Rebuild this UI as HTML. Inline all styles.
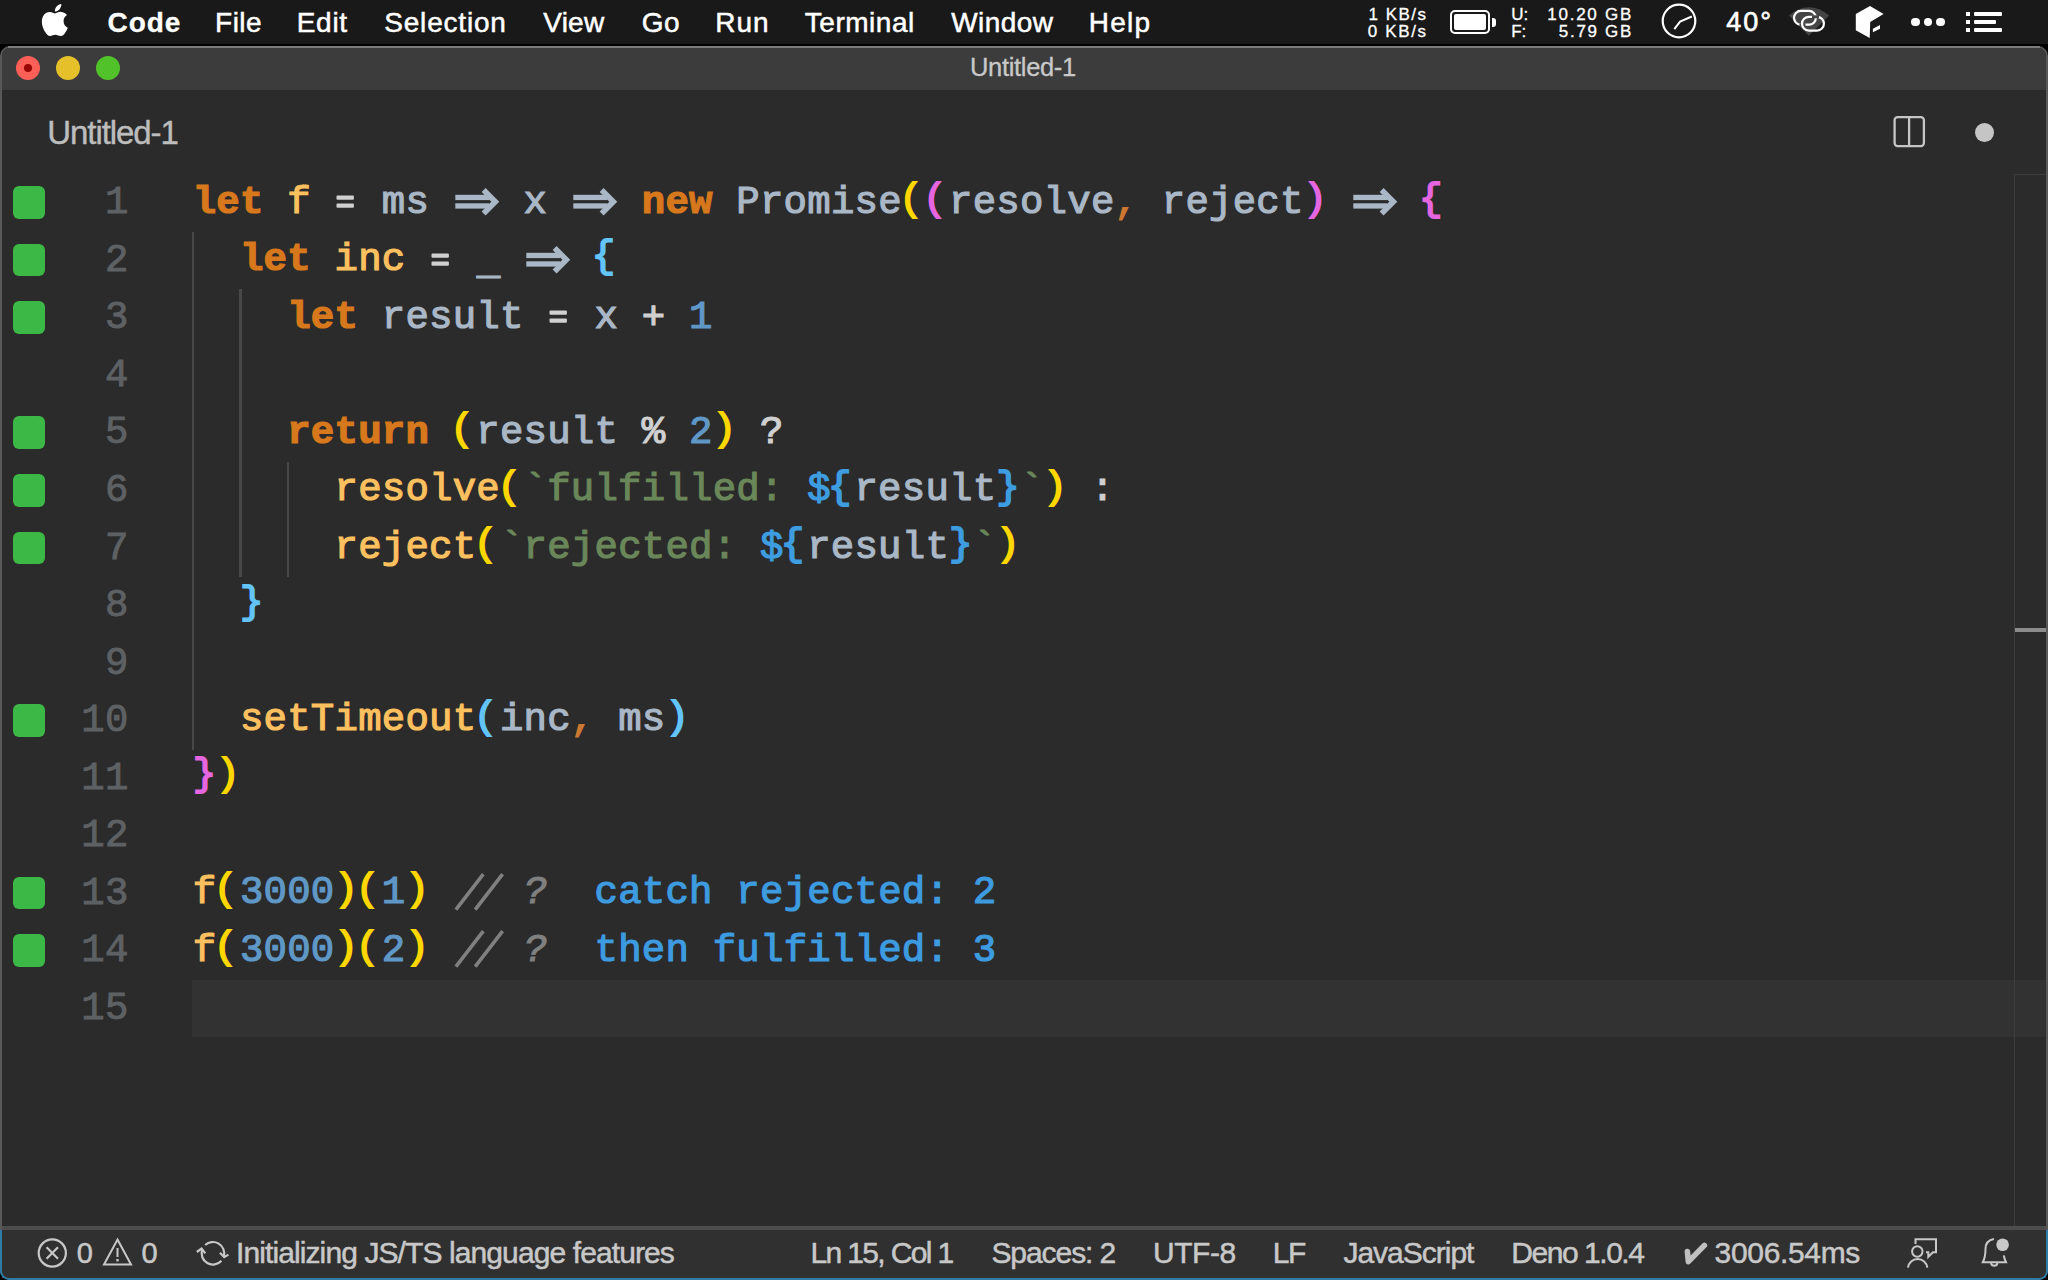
<!DOCTYPE html>
<html><head><meta charset="utf-8"><style>
html,body{margin:0;padding:0;width:2048px;height:1280px;overflow:hidden;background:#000;}
.t{position:absolute;white-space:pre;}
.cl{position:absolute;left:0;white-space:pre;font-family:"Liberation Mono", monospace;}
</style></head><body>
<div style="position:absolute;left:0px;top:0px;width:2048px;height:44px;background:#191919"></div>
<div style="position:absolute;left:0px;top:44px;width:2048px;height:2px;background:#000"></div>
<div style="position:absolute;left:0px;top:46px;width:2048px;height:1234px;background:#585858;border-radius:10px 10px 10px 10px"></div>
<div style="position:absolute;left:2px;top:48px;width:2044px;height:1230px;background:#2b2b2b;border-radius:8px"></div>
<div style="position:absolute;left:2px;top:48px;width:2044px;height:42px;background:#3c3c3c;border-radius:8px 8px 0 0"></div>
<div style="position:absolute;left:8px;top:46px;width:2032px;height:2px;background:#7a7a7a"></div>
<svg style="position:absolute;left:39px;top:3px" width="30" height="34" viewBox="0 0 30 34"><path fill="#fff" d="M24.6 18.1c0-4 3.3-5.9 3.4-6-1.9-2.7-4.8-3.1-5.8-3.2-2.5-.3-4.8 1.5-6.1 1.5-1.3 0-3.2-1.4-5.3-1.4-2.7 0-5.2 1.6-6.6 4-2.8 4.9-.7 12.1 2 16.1 1.3 1.9 2.9 4.1 5 4 2-.1 2.8-1.3 5.2-1.3 2.4 0 3.1 1.3 5.2 1.3 2.2 0 3.6-2 4.9-3.9 1.5-2.2 2.2-4.4 2.2-4.5-.1 0-4.2-1.6-4.1-6.6zM20.6 6.2c1.1-1.4 1.9-3.2 1.7-5.1-1.6.1-3.6 1.1-4.7 2.4-1 1.2-1.9 3.1-1.7 4.9 1.8.2 3.6-.9 4.7-2.2z"/></svg>
<div class="t" style="left:107.58px;top:8.50px;font-size:28px;line-height:28px;color:#ffffff;font-family:'Liberation Sans', sans-serif;font-weight:700;letter-spacing:0.910px;-webkit-text-stroke:0.3px #fff">Code</div>
<div class="t" style="left:215.09px;top:8.50px;font-size:28px;line-height:28px;color:#ffffff;font-family:'Liberation Sans', sans-serif;font-weight:400;letter-spacing:0.473px;-webkit-text-stroke:0.5px #fff">File</div>
<div class="t" style="left:296.69px;top:8.50px;font-size:28px;line-height:28px;color:#ffffff;font-family:'Liberation Sans', sans-serif;font-weight:400;letter-spacing:0.730px;-webkit-text-stroke:0.5px #fff">Edit</div>
<div class="t" style="left:384.24px;top:8.50px;font-size:28px;line-height:28px;color:#ffffff;font-family:'Liberation Sans', sans-serif;font-weight:400;letter-spacing:0.808px;-webkit-text-stroke:0.5px #fff">Selection</div>
<div class="t" style="left:543.26px;top:8.50px;font-size:28px;line-height:28px;color:#ffffff;font-family:'Liberation Sans', sans-serif;font-weight:400;letter-spacing:0.223px;-webkit-text-stroke:0.5px #fff">View</div>
<div class="t" style="left:641.80px;top:8.50px;font-size:28px;line-height:28px;color:#ffffff;font-family:'Liberation Sans', sans-serif;font-weight:400;letter-spacing:0.410px;-webkit-text-stroke:0.5px #fff">Go</div>
<div class="t" style="left:715.29px;top:8.50px;font-size:28px;line-height:28px;color:#ffffff;font-family:'Liberation Sans', sans-serif;font-weight:400;letter-spacing:0.975px;-webkit-text-stroke:0.5px #fff">Run</div>
<div class="t" style="left:804.87px;top:8.50px;font-size:28px;line-height:28px;color:#ffffff;font-family:'Liberation Sans', sans-serif;font-weight:400;letter-spacing:0.511px;-webkit-text-stroke:0.5px #fff">Terminal</div>
<div class="t" style="left:951.26px;top:8.50px;font-size:28px;line-height:28px;color:#ffffff;font-family:'Liberation Sans', sans-serif;font-weight:400;letter-spacing:0.412px;-webkit-text-stroke:0.5px #fff">Window</div>
<div class="t" style="left:1088.79px;top:8.50px;font-size:28px;line-height:28px;color:#ffffff;font-family:'Liberation Sans', sans-serif;font-weight:400;letter-spacing:1.230px;-webkit-text-stroke:0.5px #fff">Help</div>
<div class="t" style="left:1368.52px;top:6.21px;font-size:17px;line-height:17px;color:#ffffff;font-family:'Liberation Sans', sans-serif;font-weight:400;letter-spacing:1.481px;-webkit-text-stroke:0.3px #fff">1 KB/s</div>
<div class="t" style="left:1367.82px;top:23.01px;font-size:17px;line-height:17px;color:#ffffff;font-family:'Liberation Sans', sans-serif;font-weight:400;letter-spacing:1.622px;-webkit-text-stroke:0.3px #fff">0 KB/s</div>
<div style="position:absolute;left:1450px;top:10px;width:40px;height:24px;border:2px solid #fff;border-radius:5px;box-sizing:border-box"></div>
<div style="position:absolute;left:1454px;top:14px;width:32px;height:16px;background:#fff;border-radius:2px"></div>
<div style="position:absolute;left:1492px;top:17.5px;width:3.5px;height:9px;background:#fff;border-radius:0 3px 3px 0"></div>
<div class="t" style="left:1511.28px;top:6.21px;font-size:17px;line-height:17px;color:#ffffff;font-family:'Liberation Sans', sans-serif;font-weight:400;letter-spacing:0.000px;-webkit-text-stroke:0.3px #fff">U:</div>
<div class="t" style="left:1511.20px;top:23.01px;font-size:17px;line-height:17px;color:#ffffff;font-family:'Liberation Sans', sans-serif;font-weight:400;letter-spacing:0.000px;-webkit-text-stroke:0.3px #fff">F:</div>
<div class="t" style="left:1547.22px;top:6.21px;font-size:17px;line-height:17px;color:#ffffff;font-family:'Liberation Sans', sans-serif;font-weight:400;letter-spacing:1.763px;-webkit-text-stroke:0.3px #fff">10.20 GB</div>
<div class="t" style="left:1558.82px;top:23.01px;font-size:17px;line-height:17px;color:#ffffff;font-family:'Liberation Sans', sans-serif;font-weight:400;letter-spacing:1.697px;-webkit-text-stroke:0.3px #fff">5.79 GB</div>
<svg style="position:absolute;left:1655px;top:0px" width="50" height="44" viewBox="1655 0 50 44"><circle cx="1679" cy="21" r="16.3" fill="none" stroke="#fff" stroke-width="2.2"/><polyline points="1674.3,29.1 1680.1,21.6 1691.8,16.5" fill="none" stroke="#fff" stroke-width="2"/></svg>
<div class="t" style="left:1726.19px;top:9.14px;font-size:27px;line-height:27px;color:#ffffff;font-family:'Liberation Sans', sans-serif;font-weight:400;letter-spacing:2.045px;-webkit-text-stroke:0.6px #fff">40°</div>
<svg style="position:absolute;left:1785px;top:0px" width="48" height="44" viewBox="1785 0 48 44"><path d="M1788.9 15.4 Q1808.8 -1 1829.2 15.4 L1808.8 35.8 Z" fill="#454545"/><rect x="1794" y="10.9" width="21.9" height="13.8" rx="6.9" fill="none" stroke="#fff" stroke-width="2.2"/><path d="M1799.5 24.7 L1805.5 24.7" stroke="#454545" stroke-width="3"/><rect x="1802" y="16.8" width="21.9" height="13.8" rx="6.9" fill="none" stroke="#fff" stroke-width="2.2"/><path d="M1812 16.8 L1819 16.8" stroke="#454545" stroke-width="3"/></svg>
<svg style="position:absolute;left:1850px;top:0px" width="40" height="44" viewBox="1850 0 40 44"><path d="M1870 5.9 L1883.6 13.9 L1870.2 21.9 L1869.7 37.9 L1855.8 30.2 L1855.8 13.9 Z" fill="#fff"/><path d="M1872.9 28.7 L1880 24.9 L1880 28.7 L1872.9 32.3 Z" fill="#fff"/></svg>
<div style="position:absolute;left:1911.3px;top:17.8px;width:8.4px;height:8.4px;background:#fff;border-radius:50%"></div>
<div style="position:absolute;left:1923.8px;top:17.8px;width:8.4px;height:8.4px;background:#fff;border-radius:50%"></div>
<div style="position:absolute;left:1936.3px;top:17.8px;width:8.4px;height:8.4px;background:#fff;border-radius:50%"></div>
<div style="position:absolute;left:1965.8px;top:12px;width:4px;height:4.2px;background:#fff"></div>
<div style="position:absolute;left:1973.5px;top:12px;width:28.5px;height:4.2px;background:#fff;border-radius:1px"></div>
<div style="position:absolute;left:1965.8px;top:19.5px;width:4px;height:4.2px;background:#fff"></div>
<div style="position:absolute;left:1973.5px;top:19.5px;width:22.5px;height:4.2px;background:#fff;border-radius:1px"></div>
<div style="position:absolute;left:1965.8px;top:28px;width:4px;height:4.2px;background:#fff"></div>
<div style="position:absolute;left:1973.5px;top:28px;width:28.5px;height:4.2px;background:#fff;border-radius:1px"></div>
<div class="t" style="left:970.02px;top:55.11px;font-size:25.5px;line-height:25.5px;color:#c9c9c9;font-family:'Liberation Sans', sans-serif;font-weight:400;letter-spacing:-0.328px;-webkit-text-stroke:0.3px #c9c9c9">Untitled-1</div>
<div style="position:absolute;left:15.8px;top:55.8px;width:24px;height:24px;background:#fe5f57;border-radius:50%"></div>
<div style="position:absolute;left:23.9px;top:63.9px;width:7.8px;height:7.8px;background:#9a0707;border-radius:50%"></div>
<div style="position:absolute;left:55.8px;top:55.8px;width:24px;height:24px;background:#e6c02a;border-radius:50%"></div>
<div style="position:absolute;left:95.8px;top:55.8px;width:24px;height:24px;background:#52c22b;border-radius:50%"></div>
<div class="t" style="left:47.34px;top:116.37px;font-size:33px;line-height:33px;color:#bdbdbd;font-family:'Liberation Sans', sans-serif;font-weight:400;letter-spacing:-1.079px;-webkit-text-stroke:0.4px #bdbdbd">Untitled-1</div>
<svg style="position:absolute;left:1890px;top:112px" width="40" height="40" viewBox="1890 112 40 40"><rect x="1894.6" y="117.1" width="29.3" height="29" rx="3" fill="none" stroke="#c5c5c5" stroke-width="2.3"/><line x1="1909.1" y1="117" x2="1909.1" y2="146" stroke="#c5c5c5" stroke-width="2.3"/></svg>
<div style="position:absolute;left:1975.2px;top:123px;width:18.8px;height:18.8px;background:#c5c5c5;border-radius:50%"></div>
<div style="position:absolute;left:192.2px;top:979.8599999999999px;width:1853.8px;height:57.54px;background:#323232"></div>
<div style="position:absolute;left:2014px;top:174px;width:1px;height:1054px;background:#3d3d3d"></div>
<div style="position:absolute;left:2014px;top:174px;width:32px;height:1px;background:#3d3d3d"></div>
<div style="position:absolute;left:2015px;top:628.4px;width:31px;height:4px;background:#8c8c8c"></div>
<div style="position:absolute;left:192.1px;top:231.84px;width:2.2px;height:517.86px;background:#484848"></div>
<div style="position:absolute;left:239.35999999999999px;top:289.38px;width:2.2px;height:287.7px;background:#484848"></div>
<div style="position:absolute;left:286.61999999999995px;top:462.0px;width:2.2px;height:115.08px;background:#484848"></div>
<div style="position:absolute;left:12.7px;top:186.3px;width:32px;height:32.6px;background:#3cb846;border-radius:6px"></div>
<div style="position:absolute;left:12.7px;top:243.84px;width:32px;height:32.6px;background:#3cb846;border-radius:6px"></div>
<div style="position:absolute;left:12.7px;top:301.38px;width:32px;height:32.6px;background:#3cb846;border-radius:6px"></div>
<div style="position:absolute;left:12.7px;top:416.46000000000004px;width:32px;height:32.6px;background:#3cb846;border-radius:6px"></div>
<div style="position:absolute;left:12.7px;top:474.0px;width:32px;height:32.6px;background:#3cb846;border-radius:6px"></div>
<div style="position:absolute;left:12.7px;top:531.54px;width:32px;height:32.6px;background:#3cb846;border-radius:6px"></div>
<div style="position:absolute;left:12.7px;top:704.1600000000001px;width:32px;height:32.6px;background:#3cb846;border-radius:6px"></div>
<div style="position:absolute;left:12.7px;top:876.78px;width:32px;height:32.6px;background:#3cb846;border-radius:6px"></div>
<div style="position:absolute;left:12.7px;top:934.3199999999999px;width:32px;height:32.6px;background:#3cb846;border-radius:6px"></div>
<div class="cl" style="top:175.30px;left:104.97px;-webkit-text-stroke:0.9px currentColor;line-height:57.54px;font-size:39px;letter-spacing:0.230px;color:#5e6164">1</div>
<div class="cl" style="top:174.60px;left:192.70px;-webkit-text-stroke:1.2px currentColor;line-height:57.54px;font-size:39px;letter-spacing:0.230px"><span style="color:#d8781c;font-weight:700">let</span><span style="color:#a9b7c6"> </span><span style="color:#fdc05f">f</span><span style="color:#a9b7c6"> </span> <span style="color:#a9b7c6"> ms </span>  <span style="color:#a9b7c6"> x </span>  <span style="color:#a9b7c6"> </span><span style="color:#d8781c;font-weight:700">new</span><span style="color:#a9b7c6"> Promise</span><span style="color:#ffd700;position:relative;left:-2.5px;top:-2.8px;-webkit-text-stroke:1.8px currentColor">(</span><span style="color:#e566e0;position:relative;left:-2.5px;top:-2.8px;-webkit-text-stroke:1.8px currentColor">(</span><span style="color:#a9b7c6">resolve</span><span style="color:#cc7832">,</span><span style="color:#a9b7c6"> reject</span><span style="color:#e566e0;position:relative;left:0px;top:-2.8px;-webkit-text-stroke:1.8px currentColor">)</span><span style="color:#a9b7c6"> </span>  <span style="color:#a9b7c6"> </span><span style="color:#e566e0;position:relative;left:-2.8px;top:-2.8px;-webkit-text-stroke:1.8px currentColor">{</span></div>
<svg style="position:absolute;left:452.63px;top:174.30px" width="48" height="57" viewBox="0 0 48 57"><rect x="2.3" y="20.8" width="34" height="5.3" fill="#a9b7c6"/><rect x="2.3" y="29.3" width="34" height="5.3" fill="#a9b7c6"/><polyline points="30.6,16.1 42.3,27.8 30.6,39.5" fill="none" stroke="#a9b7c6" stroke-width="5.6" stroke-linejoin="miter"/></svg>
<svg style="position:absolute;left:570.78px;top:174.30px" width="48" height="57" viewBox="0 0 48 57"><rect x="2.3" y="20.8" width="34" height="5.3" fill="#a9b7c6"/><rect x="2.3" y="29.3" width="34" height="5.3" fill="#a9b7c6"/><polyline points="30.6,16.1 42.3,27.8 30.6,39.5" fill="none" stroke="#a9b7c6" stroke-width="5.6" stroke-linejoin="miter"/></svg>
<svg style="position:absolute;left:1350.57px;top:174.30px" width="48" height="57" viewBox="0 0 48 57"><rect x="2.3" y="20.8" width="34" height="5.3" fill="#a9b7c6"/><rect x="2.3" y="29.3" width="34" height="5.3" fill="#a9b7c6"/><polyline points="30.6,16.1 42.3,27.8 30.6,39.5" fill="none" stroke="#a9b7c6" stroke-width="5.6" stroke-linejoin="miter"/></svg>
<svg style="position:absolute;left:334.48px;top:174.30px" width="24" height="57" viewBox="0 0 24 57"><rect x="2.5" y="21.4" width="17.4" height="4.4" rx="1" fill="#d0d0d0"/><rect x="2.5" y="29.4" width="17.4" height="4.4" rx="1" fill="#d0d0d0"/></svg>
<div class="cl" style="top:232.84px;left:104.97px;-webkit-text-stroke:0.9px currentColor;line-height:57.54px;font-size:39px;letter-spacing:0.230px;color:#5e6164">2</div>
<div class="cl" style="top:232.14px;left:192.70px;-webkit-text-stroke:1.2px currentColor;line-height:57.54px;font-size:39px;letter-spacing:0.230px"><span style="color:#a9b7c6">  </span><span style="color:#d8781c;font-weight:700">let</span><span style="color:#a9b7c6"> </span><span style="color:#fdc05f">inc</span><span style="color:#a9b7c6"> </span> <span style="color:#a9b7c6"> </span><span style="color:#a9b7c6;position:relative;left:0.5px;top:4px">_</span><span style="color:#a9b7c6"> </span>  <span style="color:#a9b7c6"> </span><span style="color:#62c4f8;position:relative;left:-2.8px;top:-2.8px;-webkit-text-stroke:1.8px currentColor">{</span></div>
<svg style="position:absolute;left:523.52px;top:231.84px" width="48" height="57" viewBox="0 0 48 57"><rect x="2.3" y="20.8" width="34" height="5.3" fill="#a9b7c6"/><rect x="2.3" y="29.3" width="34" height="5.3" fill="#a9b7c6"/><polyline points="30.6,16.1 42.3,27.8 30.6,39.5" fill="none" stroke="#a9b7c6" stroke-width="5.6" stroke-linejoin="miter"/></svg>
<svg style="position:absolute;left:429.00px;top:231.84px" width="24" height="57" viewBox="0 0 24 57"><rect x="2.5" y="21.4" width="17.4" height="4.4" rx="1" fill="#d0d0d0"/><rect x="2.5" y="29.4" width="17.4" height="4.4" rx="1" fill="#d0d0d0"/></svg>
<div class="cl" style="top:290.38px;left:104.97px;-webkit-text-stroke:0.9px currentColor;line-height:57.54px;font-size:39px;letter-spacing:0.230px;color:#5e6164">3</div>
<div class="cl" style="top:289.68px;left:192.70px;-webkit-text-stroke:1.2px currentColor;line-height:57.54px;font-size:39px;letter-spacing:0.230px"><span style="color:#a9b7c6">    </span><span style="color:#d8781c;font-weight:700">let</span><span style="color:#a9b7c6"> result </span> <span style="color:#a9b7c6"> x </span><span style="color:#d0d0d0">+</span><span style="color:#a9b7c6"> </span><span style="color:#5f98c6">1</span></div>
<svg style="position:absolute;left:547.15px;top:289.38px" width="24" height="57" viewBox="0 0 24 57"><rect x="2.5" y="21.4" width="17.4" height="4.4" rx="1" fill="#d0d0d0"/><rect x="2.5" y="29.4" width="17.4" height="4.4" rx="1" fill="#d0d0d0"/></svg>
<div class="cl" style="top:347.92px;left:104.97px;-webkit-text-stroke:0.9px currentColor;line-height:57.54px;font-size:39px;letter-spacing:0.230px;color:#5e6164">4</div>
<div class="cl" style="top:405.46px;left:104.97px;-webkit-text-stroke:0.9px currentColor;line-height:57.54px;font-size:39px;letter-spacing:0.230px;color:#5e6164">5</div>
<div class="cl" style="top:404.76px;left:192.70px;-webkit-text-stroke:1.2px currentColor;line-height:57.54px;font-size:39px;letter-spacing:0.230px"><span style="color:#a9b7c6">    </span><span style="color:#d8781c;font-weight:700">return</span><span style="color:#a9b7c6"> </span><span style="color:#ffd700;position:relative;left:-2.5px;top:-2.8px;-webkit-text-stroke:1.8px currentColor">(</span><span style="color:#a9b7c6">result </span><span style="color:#d0d0d0">%</span><span style="color:#a9b7c6"> </span><span style="color:#5f98c6">2</span><span style="color:#ffd700;position:relative;left:0px;top:-2.8px;-webkit-text-stroke:1.8px currentColor">)</span><span style="color:#a9b7c6"> </span><span style="color:#d0d0d0">?</span></div>
<div class="cl" style="top:463.00px;left:104.97px;-webkit-text-stroke:0.9px currentColor;line-height:57.54px;font-size:39px;letter-spacing:0.230px;color:#5e6164">6</div>
<div class="cl" style="top:462.30px;left:192.70px;-webkit-text-stroke:1.2px currentColor;line-height:57.54px;font-size:39px;letter-spacing:0.230px"><span style="color:#a9b7c6">      </span><span style="color:#fdc05f">resolve</span><span style="color:#ffd700;position:relative;left:-2.5px;top:-2.8px;-webkit-text-stroke:1.8px currentColor">(</span><span style="color:#6a8759">`</span><span style="color:#6a8759">fulfilled: </span><span style="color:#3d9de0">$</span><span style="color:#3d9de0;position:relative;left:-2.8px;top:-2.8px;-webkit-text-stroke:1.8px currentColor">{</span><span style="color:#a9b7c6">result</span><span style="color:#3d9de0;position:relative;left:0px;top:-2.8px;-webkit-text-stroke:1.8px currentColor">}</span><span style="color:#6a8759">`</span><span style="color:#ffd700;position:relative;left:0px;top:-2.8px;-webkit-text-stroke:1.8px currentColor">)</span><span style="color:#a9b7c6"> </span><span style="color:#d0d0d0">:</span></div>
<div class="cl" style="top:520.54px;left:104.97px;-webkit-text-stroke:0.9px currentColor;line-height:57.54px;font-size:39px;letter-spacing:0.230px;color:#5e6164">7</div>
<div class="cl" style="top:519.84px;left:192.70px;-webkit-text-stroke:1.2px currentColor;line-height:57.54px;font-size:39px;letter-spacing:0.230px"><span style="color:#a9b7c6">      </span><span style="color:#fdc05f">reject</span><span style="color:#ffd700;position:relative;left:-2.5px;top:-2.8px;-webkit-text-stroke:1.8px currentColor">(</span><span style="color:#6a8759">`</span><span style="color:#6a8759">rejected: </span><span style="color:#3d9de0">$</span><span style="color:#3d9de0;position:relative;left:-2.8px;top:-2.8px;-webkit-text-stroke:1.8px currentColor">{</span><span style="color:#a9b7c6">result</span><span style="color:#3d9de0;position:relative;left:0px;top:-2.8px;-webkit-text-stroke:1.8px currentColor">}</span><span style="color:#6a8759">`</span><span style="color:#ffd700;position:relative;left:0px;top:-2.8px;-webkit-text-stroke:1.8px currentColor">)</span></div>
<div class="cl" style="top:578.08px;left:104.97px;-webkit-text-stroke:0.9px currentColor;line-height:57.54px;font-size:39px;letter-spacing:0.230px;color:#5e6164">8</div>
<div class="cl" style="top:577.38px;left:192.70px;-webkit-text-stroke:1.2px currentColor;line-height:57.54px;font-size:39px;letter-spacing:0.230px"><span style="color:#a9b7c6">  </span><span style="color:#62c4f8;position:relative;left:0px;top:-2.8px;-webkit-text-stroke:1.8px currentColor">}</span></div>
<div class="cl" style="top:635.62px;left:104.97px;-webkit-text-stroke:0.9px currentColor;line-height:57.54px;font-size:39px;letter-spacing:0.230px;color:#5e6164">9</div>
<div class="cl" style="top:693.16px;left:81.34px;-webkit-text-stroke:0.9px currentColor;line-height:57.54px;font-size:39px;letter-spacing:0.230px;color:#5e6164">10</div>
<div class="cl" style="top:692.46px;left:192.70px;-webkit-text-stroke:1.2px currentColor;line-height:57.54px;font-size:39px;letter-spacing:0.230px"><span style="color:#a9b7c6">  </span><span style="color:#fdc05f">setTimeout</span><span style="color:#62c4f8;position:relative;left:-2.5px;top:-2.8px;-webkit-text-stroke:1.8px currentColor">(</span><span style="color:#a9b7c6">inc</span><span style="color:#cc7832">,</span><span style="color:#a9b7c6"> ms</span><span style="color:#62c4f8;position:relative;left:0px;top:-2.8px;-webkit-text-stroke:1.8px currentColor">)</span></div>
<div class="cl" style="top:750.70px;left:81.34px;-webkit-text-stroke:0.9px currentColor;line-height:57.54px;font-size:39px;letter-spacing:0.230px;color:#5e6164">11</div>
<div class="cl" style="top:750.00px;left:192.70px;-webkit-text-stroke:1.2px currentColor;line-height:57.54px;font-size:39px;letter-spacing:0.230px"><span style="color:#e566e0;position:relative;left:0px;top:-2.8px;-webkit-text-stroke:1.8px currentColor">}</span><span style="color:#ffd700;position:relative;left:0px;top:-2.8px;-webkit-text-stroke:1.8px currentColor">)</span></div>
<div class="cl" style="top:808.24px;left:81.34px;-webkit-text-stroke:0.9px currentColor;line-height:57.54px;font-size:39px;letter-spacing:0.230px;color:#5e6164">12</div>
<div class="cl" style="top:865.78px;left:81.34px;-webkit-text-stroke:0.9px currentColor;line-height:57.54px;font-size:39px;letter-spacing:0.230px;color:#5e6164">13</div>
<div class="cl" style="top:865.08px;left:192.70px;-webkit-text-stroke:1.2px currentColor;line-height:57.54px;font-size:39px;letter-spacing:0.230px"><span style="color:#fdc05f">f</span><span style="color:#ffd700;position:relative;left:-2.5px;top:-2.8px;-webkit-text-stroke:1.8px currentColor">(</span><span style="color:#5f98c6">3000</span><span style="color:#ffd700;position:relative;left:0px;top:-2.8px;-webkit-text-stroke:1.8px currentColor">)</span><span style="color:#ffd700;position:relative;left:-2.5px;top:-2.8px;-webkit-text-stroke:1.8px currentColor">(</span><span style="color:#5f98c6">1</span><span style="color:#ffd700;position:relative;left:0px;top:-2.8px;-webkit-text-stroke:1.8px currentColor">)</span><span style="color:#a9b7c6"> </span>  <span style="color:#a9b7c6"> </span><span style="color:#808080;font-style:italic">?</span><span style="color:#a9b7c6">  </span><span style="color:#3d9be0">catch rejected: 2</span></div>
<svg style="position:absolute;left:452.63px;top:864.78px" width="54" height="57" viewBox="0 0 54 57"><path d="M2.9 44.6 L30.3 9.2 M22.2 44.6 L49.6 9.2" stroke="#808080" stroke-width="3.6" fill="none" stroke-linecap="butt"/></svg>
<div class="cl" style="top:923.32px;left:81.34px;-webkit-text-stroke:0.9px currentColor;line-height:57.54px;font-size:39px;letter-spacing:0.230px;color:#5e6164">14</div>
<div class="cl" style="top:922.62px;left:192.70px;-webkit-text-stroke:1.2px currentColor;line-height:57.54px;font-size:39px;letter-spacing:0.230px"><span style="color:#fdc05f">f</span><span style="color:#ffd700;position:relative;left:-2.5px;top:-2.8px;-webkit-text-stroke:1.8px currentColor">(</span><span style="color:#5f98c6">3000</span><span style="color:#ffd700;position:relative;left:0px;top:-2.8px;-webkit-text-stroke:1.8px currentColor">)</span><span style="color:#ffd700;position:relative;left:-2.5px;top:-2.8px;-webkit-text-stroke:1.8px currentColor">(</span><span style="color:#5f98c6">2</span><span style="color:#ffd700;position:relative;left:0px;top:-2.8px;-webkit-text-stroke:1.8px currentColor">)</span><span style="color:#a9b7c6"> </span>  <span style="color:#a9b7c6"> </span><span style="color:#808080;font-style:italic">?</span><span style="color:#a9b7c6">  </span><span style="color:#3d9be0">then fulfilled: 3</span></div>
<svg style="position:absolute;left:452.63px;top:922.32px" width="54" height="57" viewBox="0 0 54 57"><path d="M2.9 44.6 L30.3 9.2 M22.2 44.6 L49.6 9.2" stroke="#808080" stroke-width="3.6" fill="none" stroke-linecap="butt"/></svg>
<div class="cl" style="top:980.86px;left:81.34px;-webkit-text-stroke:0.9px currentColor;line-height:57.54px;font-size:39px;letter-spacing:0.230px;color:#5e6164">15</div>
<div style="position:absolute;left:2px;top:1226px;width:2044px;height:4px;background:#4d4d4d"></div>
<div style="position:absolute;left:2px;top:1230px;width:2044px;height:48px;background:#303030"></div>
<div style="position:absolute;left:0px;top:1230px;width:2048px;height:50px;background:#2f7ba6;border-radius:0 0 9px 9px"></div>
<div style="position:absolute;left:2px;top:1230px;width:2044px;height:47.8px;background:#303030;border-radius:0 0 7px 7px"></div>
<svg style="position:absolute;left:30px;top:1232px" width="40" height="40" viewBox="30 1232 40 40"><circle cx="52.3" cy="1253" r="13.6" fill="none" stroke="#c8c8c8" stroke-width="2.2"/><path d="M46.6 1247.3 L58 1258.7 M58 1247.3 L46.6 1258.7" stroke="#c8c8c8" stroke-width="2.2"/></svg>
<div class="t" style="left:76.84px;top:1239.25px;font-size:29px;line-height:29px;color:#c8c8c8;font-family:'Liberation Sans', sans-serif;font-weight:400;letter-spacing:0.000px;-webkit-text-stroke:0.5px #c8c8c8">0</div>
<svg style="position:absolute;left:100px;top:1232px" width="36" height="40" viewBox="100 1232 36 40"><path d="M117.5 1239.5 L131 1264.5 L104 1264.5 Z" fill="none" stroke="#c8c8c8" stroke-width="2" stroke-linejoin="miter"/><path d="M117.5 1248 L117.5 1257" stroke="#c8c8c8" stroke-width="2"/><rect x="116.3" y="1259" width="2.4" height="2.4" fill="#c8c8c8"/></svg>
<div class="t" style="left:141.54px;top:1239.25px;font-size:29px;line-height:29px;color:#c8c8c8;font-family:'Liberation Sans', sans-serif;font-weight:400;letter-spacing:0.000px;-webkit-text-stroke:0.5px #c8c8c8">0</div>
<svg style="position:absolute;left:192px;top:1236px" width="42" height="34" viewBox="192 1236 42 34"><path d="M205.19 1245.04 A11.3 11.3 0 0 1 223.81 1256.22" fill="none" stroke="#c8c8c8" stroke-width="2.2"/><path d="M221.43 1260.71 A11.3 11.3 0 0 1 202.22 1249.62" fill="none" stroke="#c8c8c8" stroke-width="2.2"/><path d="M220 1252.8 L224.2 1257.2 L228.4 1254.6" fill="none" stroke="#c8c8c8" stroke-width="2.2"/><path d="M196.8 1252 L201.6 1248.6 L205.3 1253.4" fill="none" stroke="#c8c8c8" stroke-width="2.2"/></svg>
<div class="t" style="left:236.03px;top:1238.40px;font-size:30px;line-height:30px;color:#c8c8c8;font-family:'Liberation Sans', sans-serif;font-weight:400;letter-spacing:-0.900px;-webkit-text-stroke:0.5px #c8c8c8">Initializing JS/TS language features</div>
<div class="t" style="left:810.52px;top:1238.40px;font-size:30px;line-height:30px;color:#c8c8c8;font-family:'Liberation Sans', sans-serif;font-weight:400;letter-spacing:-1.652px;-webkit-text-stroke:0.5px #c8c8c8">Ln 15, Col 1</div>
<div class="t" style="left:991.45px;top:1238.40px;font-size:30px;line-height:30px;color:#c8c8c8;font-family:'Liberation Sans', sans-serif;font-weight:400;letter-spacing:-1.075px;-webkit-text-stroke:0.5px #c8c8c8">Spaces: 2</div>
<div class="t" style="left:1152.97px;top:1238.40px;font-size:30px;line-height:30px;color:#c8c8c8;font-family:'Liberation Sans', sans-serif;font-weight:400;letter-spacing:-0.419px;-webkit-text-stroke:0.5px #c8c8c8">UTF-8</div>
<div class="t" style="left:1272.73px;top:1238.40px;font-size:30px;line-height:30px;color:#c8c8c8;font-family:'Liberation Sans', sans-serif;font-weight:400;letter-spacing:-1.475px;-webkit-text-stroke:0.5px #c8c8c8">LF</div>
<div class="t" style="left:1343.45px;top:1238.40px;font-size:30px;line-height:30px;color:#c8c8c8;font-family:'Liberation Sans', sans-serif;font-weight:400;letter-spacing:-1.006px;-webkit-text-stroke:0.5px #c8c8c8">JavaScript</div>
<div class="t" style="left:1511.33px;top:1238.40px;font-size:30px;line-height:30px;color:#c8c8c8;font-family:'Liberation Sans', sans-serif;font-weight:400;letter-spacing:-1.464px;-webkit-text-stroke:0.5px #c8c8c8">Deno 1.0.4</div>
<div class="t" style="left:1714.58px;top:1238.40px;font-size:30px;line-height:30px;color:#c8c8c8;font-family:'Liberation Sans', sans-serif;font-weight:400;letter-spacing:-0.331px;-webkit-text-stroke:0.5px #c8c8c8">3006.54ms</div>
<svg style="position:absolute;left:1680px;top:1236px" width="30" height="34" viewBox="1680 1236 30 34"><path d="M1687.4 1251.6 L1688.4 1261.6 L1704.4 1245.4" fill="none" stroke="#c0c0c0" stroke-width="5.6" stroke-linecap="round" stroke-linejoin="round"/></svg>
<svg style="position:absolute;left:1900px;top:1232px" width="46" height="40" viewBox="1900 1232 46 40"><path d="M1915.5 1244 L1915.5 1239.2 L1936 1239.2 L1936 1252.2 L1933 1252.2 L1928.3 1256.8 L1928.3 1252.2 L1926 1252.2" fill="none" stroke="#c8c8c8" stroke-width="2"/><circle cx="1917.3" cy="1251.5" r="5.2" fill="none" stroke="#c8c8c8" stroke-width="2"/><path d="M1908 1267.6 A9.7 9.5 0 0 1 1927.3 1267.6" fill="none" stroke="#c8c8c8" stroke-width="2"/></svg>
<svg style="position:absolute;left:1975px;top:1232px" width="40" height="40" viewBox="1975 1232 40 40"><path d="M1994 1239 C1988 1240 1985.5 1244 1985.5 1249 C1985.5 1255 1984.5 1259 1982.8 1262.2 L2006 1262.2 C2005 1260 2004 1257 2003.8 1255.3" fill="none" stroke="#c8c8c8" stroke-width="2"/><path d="M1991 1263 A3.3 3.3 0 0 0 1997.5 1263" fill="none" stroke="#c8c8c8" stroke-width="2"/><circle cx="2002.6" cy="1244.7" r="6.3" fill="#c8c8c8"/></svg>
</body></html>
